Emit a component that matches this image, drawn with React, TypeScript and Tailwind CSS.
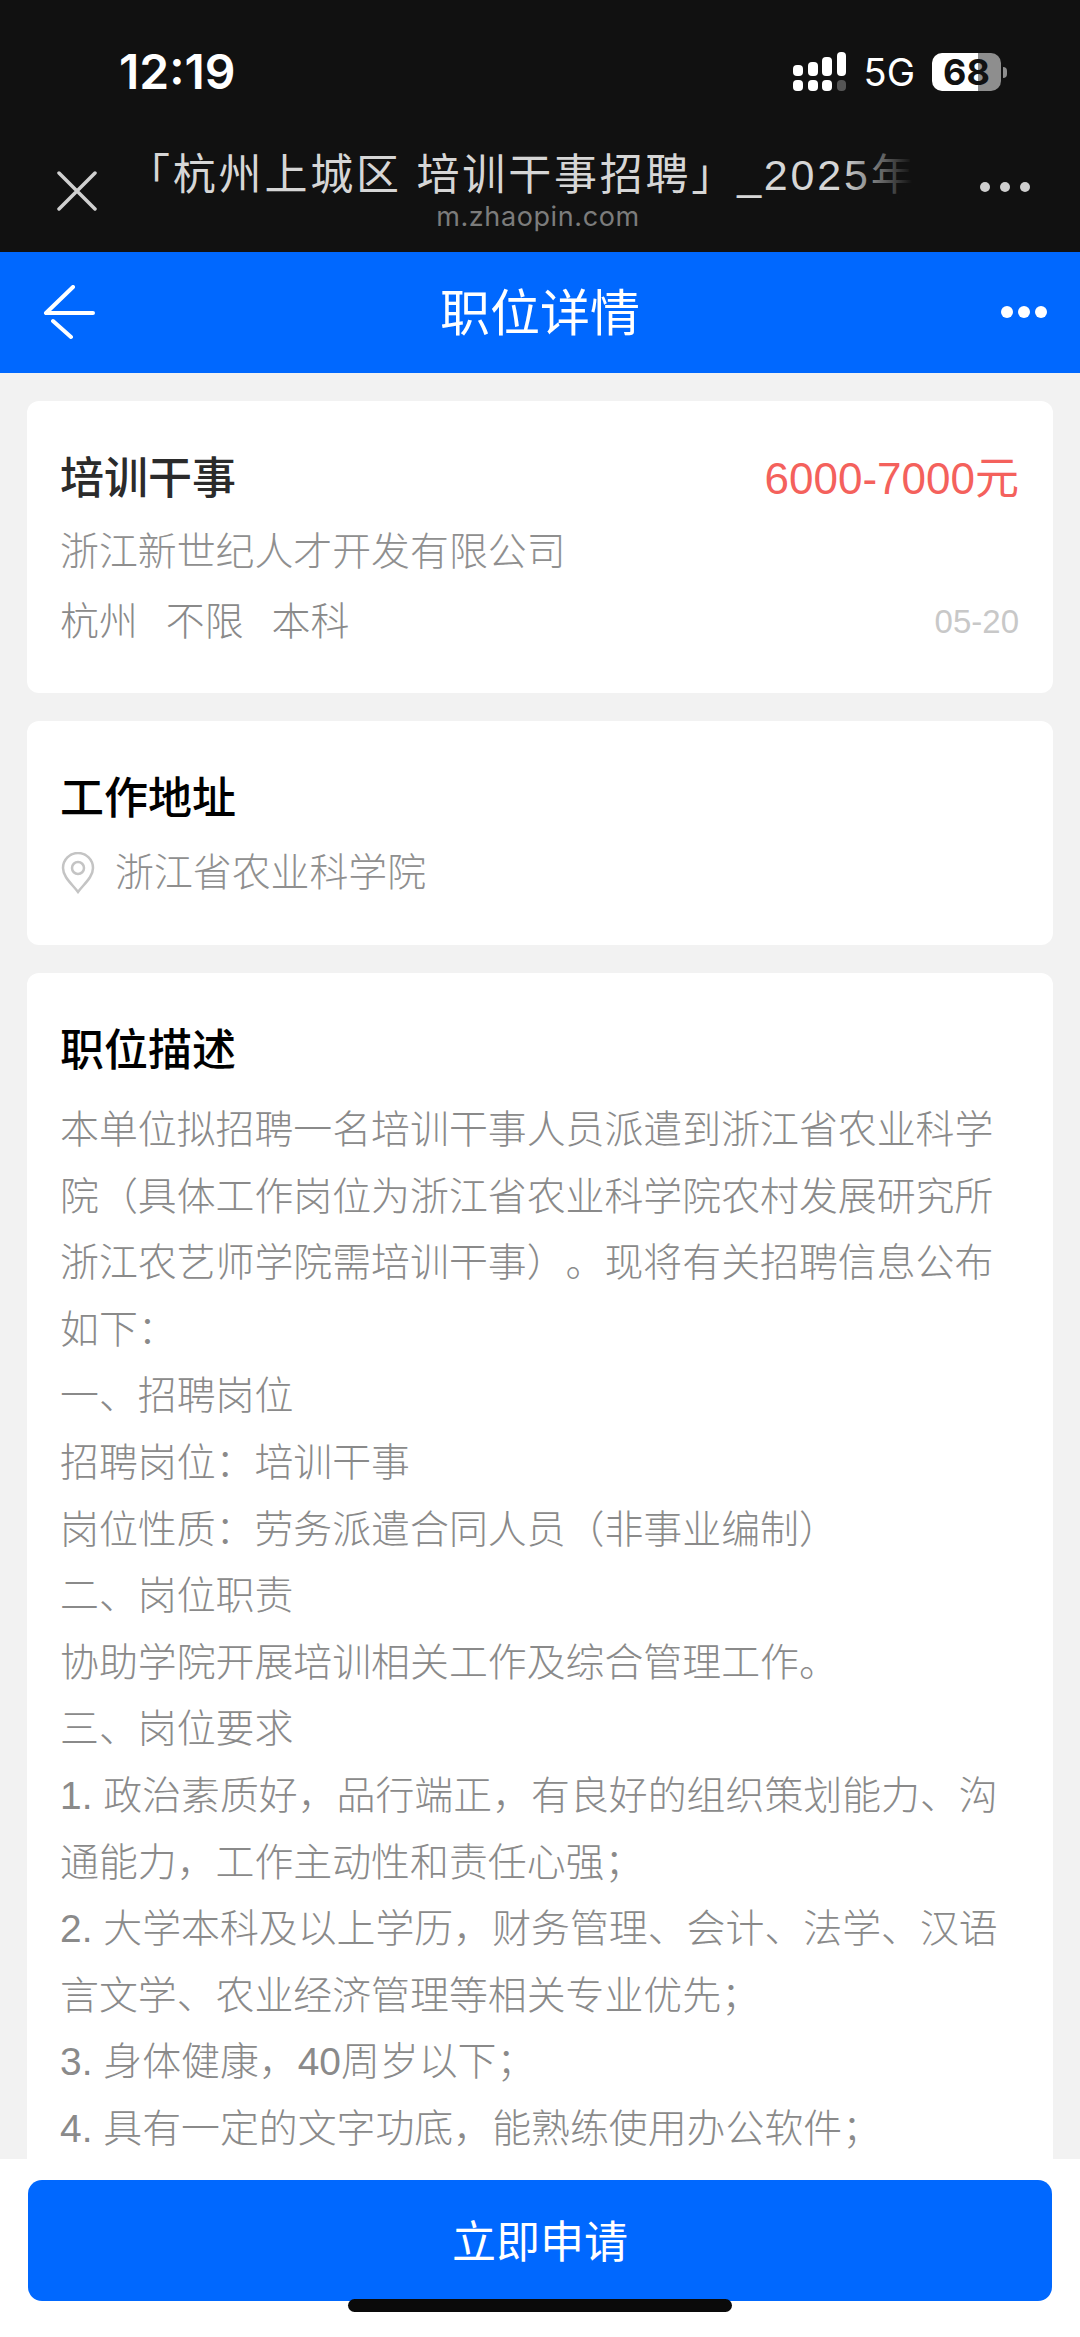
const cjk = "font-['Liberation_Sans','Noto_Sans_CJK_SC',sans-serif]";

const descLines = [
  "本单位拟招聘一名培训干事人员派遣到浙江省农业科学院（具体工作岗位为浙江省农业科学院农村发展研究所浙江农艺师学院需培训干事）。现将有关招聘信息公布如下：",
  "一、招聘岗位",
  "招聘岗位：培训干事",
  "岗位性质：劳务派遣合同人员（非事业编制）",
  "二、岗位职责",
  "协助学院开展培训相关工作及综合管理工作。",
  "三、岗位要求",
  "1. 政治素质好，品行端正，有良好的组织策划能力、沟通能力，工作主动性和责任心强；",
  "2. 大学本科及以上学历，财务管理、会计、法学、汉语言文学、农业经济管理等相关专业优先；",
  "3. 身体健康，40周岁以下；",
  "4. 具有一定的文字功底，能熟练使用办公软件；",
];

function SignalIcon() {
  return (
    <svg width="54" height="40" viewBox="0 0 54 40" fill="#fff">
      <rect x="0" y="13" width="10" height="11" rx="4" />
      <rect x="15" y="10" width="10" height="14" rx="4" />
      <rect x="29" y="5" width="10" height="19" rx="4" />
      <rect x="44" y="0" width="9" height="24" rx="4" />
      <rect x="0" y="28" width="10" height="11" rx="4" />
      <rect x="15" y="28" width="10" height="11" rx="4" />
      <rect x="29" y="28" width="10" height="11" rx="4" />
      <rect x="44" y="28" width="9" height="11" rx="4" fill="#555" />
    </svg>
  );
}

function Battery() {
  return (
    <div className="flex items-center gap-[2px]">
      <div className="relative flex h-[38px] w-[69px] overflow-hidden rounded-[10px]">
        <div className="w-[46px] bg-white" />
        <div className="flex-1 bg-[#8e8e8e]" />
        <span className="absolute inset-0 flex items-center justify-center font-['Inter',sans-serif] text-[36px] font-bold leading-none text-[#111]">
          68
        </span>
      </div>
      <div className="h-[11px] w-[4px] rounded-r-full bg-[#8e8e8e]" />
    </div>
  );
}

function Dots({ color, r, gap }: { color: string; r: number; gap: number }) {
  const step = r * 2 + gap;
  return (
    <svg width={step * 3 - gap} height={r * 2} fill={color}>
      <circle cx={r} cy={r} r={r} />
      <circle cx={r + step} cy={r} r={r} />
      <circle cx={r + step * 2} cy={r} r={r} />
    </svg>
  );
}

function BrowserBar() {
  return (
    <div className="h-[252px] shrink-0 bg-[#111111] text-white">
      <div className="flex h-[148px] items-start justify-between pl-[119px] pr-[73px] pt-[49px]">
        <span className="font-['Inter',sans-serif] text-[48px] font-semibold leading-[46px]">12:19</span>
        <div className="flex items-center gap-[17px] pt-[3px]">
          <SignalIcon />
          <span className="font-['Inter',sans-serif] text-[38px] leading-[38px] text-white">5G</span>
          <Battery />
        </div>
      </div>
      <div className="flex items-start pl-[57px] pr-[50px]">
        <svg width="40" height="40" viewBox="0 0 40 40" className="mt-[23px] shrink-0" stroke="#d0d0d0" strokeWidth="3.5" strokeLinecap="round">
          <path d="M2 2 L38 38 M38 2 L2 38" />
        </svg>
        <div className="relative ml-[30px] w-[785px] shrink-0 overflow-hidden">
          <div className={`${cjk} whitespace-nowrap text-[43px] leading-[54px] tracking-[2.8px] text-[#d6d6d6]`}>
            「杭州上城区 培训干事招聘」_2025年
          </div>
          <div className="absolute right-0 top-0 h-[54px] w-[70px] bg-gradient-to-r from-transparent to-[#111111]" />
          <div className="pl-[37px] text-center font-['Inter',sans-serif] text-[27px] leading-[30px] tracking-[0.6px] text-[#7c7c7c]">
            m.zhaopin.com
          </div>
        </div>
        <div className="ml-auto mt-[34px]">
          <Dots color="#d0d0d0" r={5} gap={10} />
        </div>
      </div>
    </div>
  );
}

function NavBar() {
  return (
    <div className="relative flex h-[121px] shrink-0 items-center justify-center bg-[#0068ff] text-white">
      <svg width="54" height="56" viewBox="0 0 54 56" className="absolute left-[43px] top-[33px]" fill="none" stroke="#fff" strokeWidth="4" strokeLinecap="round" strokeLinejoin="round">
        <path d="M30 2 L3 28 H50 M10 36 L28 52" />
      </svg>
      <span className={`${cjk} pt-[2px] text-[50px] leading-none`}>职位详情</span>
      <div className="absolute right-[33px] top-[54px]">
        <Dots color="#fff" r={6} gap={5} />
      </div>
    </div>
  );
}

function PinIcon() {
  return (
    <svg width="34" height="42" viewBox="0 0 34 42" fill="none" stroke="#c4c4c4" strokeWidth="2.5" className="shrink-0">
      <path d="M17 40 C11 32 2 25 2 16 A15 15 0 0 1 32 16 C32 25 23 32 17 40 Z" />
      <circle cx="17" cy="16" r="6" />
    </svg>
  );
}

export default function App() {
  return (
    <div className={`${cjk} flex h-[2337px] w-[1080px] flex-col overflow-hidden bg-white [text-spacing-trim:space-all] [font-kerning:none]`}>
      <BrowserBar />
      <NavBar />
      <main className="flex min-h-0 flex-1 flex-col gap-[28px] overflow-hidden bg-[#f2f2f2] px-[27px] pt-[28px]">
        <section className="h-[292px] shrink-0 rounded-[12px] bg-white px-[34px] pt-[48px]">
          <div className="-ml-[1px] flex items-center justify-between">
            <h2 className="text-[44px] font-medium leading-[60px] text-[#2b2b2b]">培训干事</h2>
            <span className="text-[44px] leading-[60px] text-[#f4615c]">6000-7000元</span>
          </div>
          <p className="-ml-[1px] mt-[15px] text-[38.9px] font-light leading-[56px] text-[#8f8f8f]">浙江新世纪人才开发有限公司</p>
          <div className="-ml-[1px] mt-[14px] flex items-center justify-between">
            <div className="flex gap-[28px] text-[38.9px] font-light leading-[56px] text-[#8a8a8a]">
              <span>杭州</span>
              <span>不限</span>
              <span>本科</span>
            </div>
            <span className="text-[33px] text-[#c8c8c8]">05-20</span>
          </div>
        </section>
        <section className="h-[224px] shrink-0 rounded-[12px] bg-white px-[34px] pt-[48px]">
          <h2 className="-ml-[1px] text-[44px] font-medium leading-[60px] text-black">工作地址</h2>
          <div className="mt-[16px] flex items-center gap-[20px]">
            <PinIcon />
            <span className="text-[38.9px] font-light leading-[56px] text-[#8f8f8f]">浙江省农业科学院</span>
          </div>
        </section>
        <section className="shrink-0 rounded-t-[12px] bg-white px-[34px] pt-[48px]">
          <h2 className="-ml-[1px] text-[44px] font-medium leading-[60px] text-black">职位描述</h2>
          <div className="-ml-[1px] mt-[16px] text-[38.9px] font-light leading-[66.6px] text-[#8a8a8a]">
            {descLines.map((line) => (
              <p key={line}>{line}</p>
            ))}
          </div>
        </section>
      </main>
      <footer className="relative h-[178px] shrink-0 bg-white px-[28px] pt-[21px]">
        <button className="flex h-[121px] w-full items-center justify-center rounded-[14px] bg-[#0068ff] pt-[5px] text-[44px] text-white">
          立即申请
        </button>
        <div className="absolute left-[348px] top-[140px] h-[13px] w-[384px] rounded-full bg-[#0a0a0a]" />
      </footer>
    </div>
  );
}
